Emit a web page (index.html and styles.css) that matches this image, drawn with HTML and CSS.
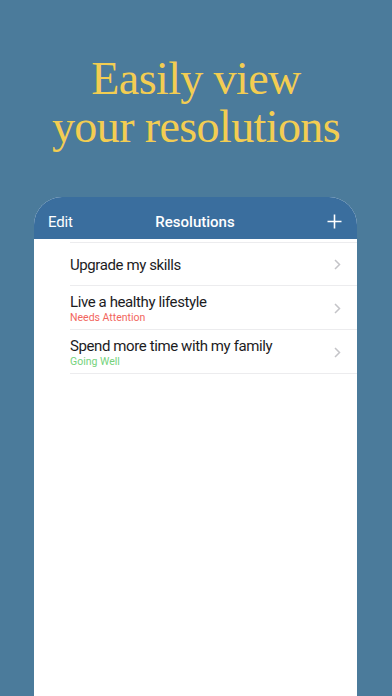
FILE: index.html
```html
<!DOCTYPE html>
<html lang="en">
<head>
  <meta charset="UTF-8" />
  <meta name="viewport" content="width=device-width, initial-scale=1.0"/>
  <title>Resolutions</title>
  <link rel="stylesheet" href="styles.css">
</head>
<body>
  <h1 class="headline">Easily view<br>your resolutions</h1>
  <div class="card">
    <div class="navbar">
      <span class="nav-edit">Edit</span>
      <span class="nav-title">Resolutions</span>
      <svg class="nav-add" width="15" height="15" viewBox="0 0 15 15">
        <path d="M7.5 0.5v14M0.5 7.5h14" stroke="#fff" stroke-width="1.6" fill="none"/>
      </svg>
    </div>
    <ul class="list">
      <li class="row">
        <div class="row-text">
          <div class="row-title">Upgrade my skills</div>
        </div>
        <svg class="chevron" width="7" height="11" viewBox="0 0 7 11"><path d="M1 1l4.5 4.5L1 10" stroke="#c4c4c8" stroke-width="1.5" fill="none"/></svg>
      </li>
      <li class="row">
        <div class="row-text">
          <div class="row-title">Live a healthy lifestyle</div>
          <div class="row-status attention">Needs Attention</div>
        </div>
        <svg class="chevron" width="7" height="11" viewBox="0 0 7 11"><path d="M1 1l4.5 4.5L1 10" stroke="#c4c4c8" stroke-width="1.5" fill="none"/></svg>
      </li>
      <li class="row">
        <div class="row-text">
          <div class="row-title">Spend more time with my family</div>
          <div class="row-status well">Going Well</div>
        </div>
        <svg class="chevron" width="7" height="11" viewBox="0 0 7 11"><path d="M1 1l4.5 4.5L1 10" stroke="#c4c4c8" stroke-width="1.5" fill="none"/></svg>
      </li>
    </ul>
  </div>
</body>
</html>
```

FILE: styles.css
```css
body {
  margin: 0;
  height: 696px;
  overflow: hidden;
  background-color: #4b7b9b;
  font-family: Roboto, "Noto Sans", sans-serif;
}
.headline {
  margin: 0;
  padding-top: 55px;
  font-family: "Liberation Serif", serif;
  font-weight: normal;
  font-size: 46px;
  line-height: 48px;
  letter-spacing: -0.6px;
  text-align: center;
  color: #f3cd52;
}
.card {
  margin: 46px 0 0 34px;
  width: 323px;
  height: 520px;
  background: #fff;
  border-radius: 28px 28px 0 0;
  overflow: hidden;
}
.navbar {
  height: 42px;
  box-sizing: border-box;
  padding: 0 15px 8px 14px;
  display: flex;
  align-items: flex-end;
  justify-content: space-between;
  background: #3a6e9e;
  color: #fff;
}
.nav-edit {
  font-size: 15px;
  line-height: 18px;
  letter-spacing: -0.2px;
  width: 40px;
}
.nav-title {
  font-size: 15px;
  line-height: 18px;
  font-weight: 500;
}
.nav-add {
  margin-left: 25px;
  margin-bottom: 2px;
}
.list {
  margin: 0;
  padding: 3px 0 0 36px;
  list-style: none;
}
.row {
  height: 44px;
  box-sizing: border-box;
  padding: 1px 16px 0 0;
  display: flex;
  align-items: center;
  border-bottom: 1px solid #ececee;
}
.row:first-child {
  border-top: 1px solid #ececee;
}
.row-text {
  flex: 1;
}
.row-title {
  font-size: 15px;
  line-height: 18px;
  letter-spacing: -0.4px;
  color: #1c1c1e;
}
.row-status {
  font-size: 10.5px;
  line-height: 13px;
}
.attention {
  color: #f2665e;
}
.well {
  color: #74d27b;
}
```
